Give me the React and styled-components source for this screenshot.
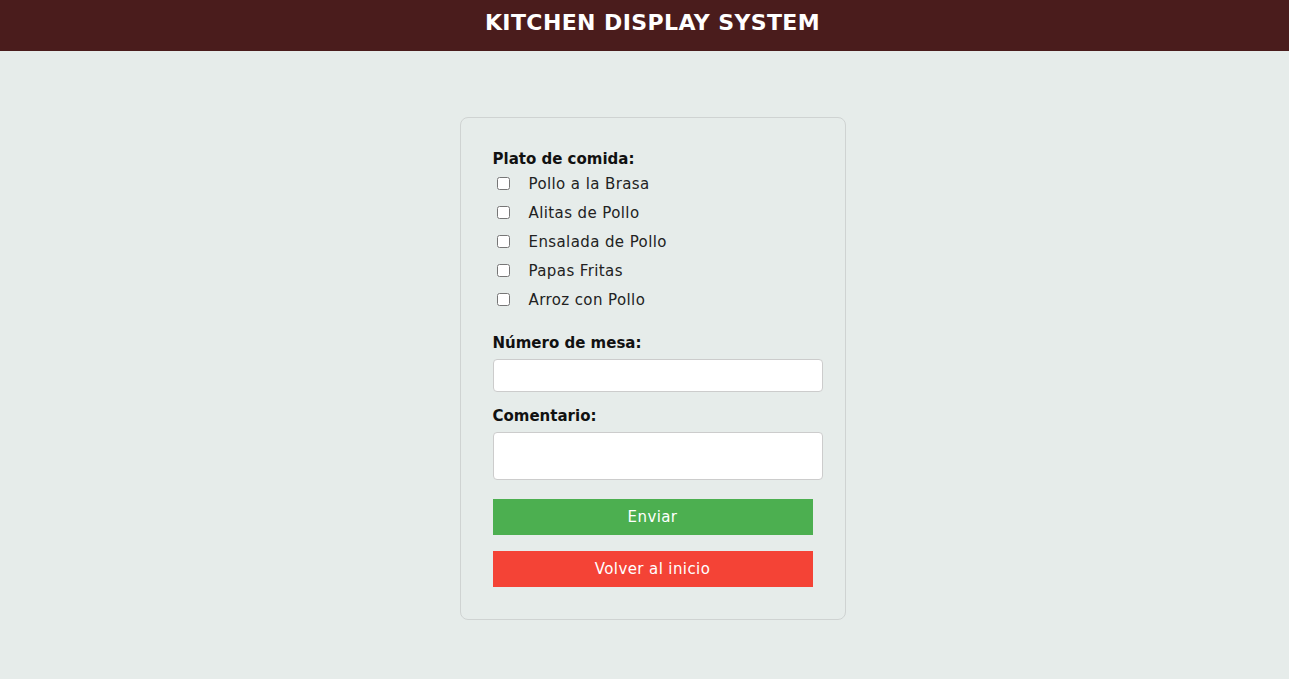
import React from "react"
import styled, { createGlobalStyle } from "styled-components"

const GlobalStyle = createGlobalStyle`
    body {
        margin: 0;
        background: #e6ecea;
        font-family: "DejaVu Sans", "Open Sans", sans-serif;
    }
`

const Header = styled.header`
    height: 51px;
    background: #4a1c1c;
    display: flex;
    align-items: center;
    justify-content: center;
    padding-left: 16px;
    padding-bottom: 6px;
    box-sizing: border-box;
`

const Title = styled.h1`
    margin: 0;
    color: #ffffff;
    font-size: 22px;
    font-weight: 700;
    letter-spacing: 0.4px;
`

const Main = styled.main`
    display: flex;
    justify-content: center;
    padding: 66px 0 0 16px;
`

const Card = styled.form`
    width: 320px;
    padding: 32px;
    border: 1px solid #cfd3d2;
    border-radius: 8px;
    display: flex;
    flex-direction: column;
`

const Label = styled.div`
    font-size: 15px;
    font-weight: 700;
    color: #111;
    line-height: 18px;
    margin-top: ${({ top }) => top || "0px"};
    margin-bottom: ${({ bottom }) => bottom || "7px"};
`

const Options = styled.div`
    display: flex;
    flex-direction: column;
`

const Option = styled.label`
    display: flex;
    align-items: center;
    height: 29px;
    font-size: 15px;
    letter-spacing: 0.4px;
    color: #222;
`

const Check = styled.input`
    width: 13px;
    height: 13px;
    margin: 0 19px 0 4px;
`

const Field = styled.input`
    width: 100%;
    height: 23px;
    padding: 4px;
    border: 1px solid #cccccc;
    border-radius: 4px;
    background: #fff;
    margin: 0;
    font: inherit;
`

const Area = styled.textarea`
    width: 100%;
    height: 38px;
    padding: 4px;
    border: 1px solid #cccccc;
    border-radius: 4px;
    background: #fff;
    margin: 0;
    resize: none;
    display: block;
    font: inherit;
`

const Button = styled.button`
    width: 320px;
    height: 36px;
    border: none;
    color: #fff;
    font-family: inherit;
    font-size: 15px;
    letter-spacing: 0.4px;
    background: ${({ color }) => color};
    margin-top: ${({ top }) => top};
    cursor: pointer;
`

const platos = [
    "Pollo a la Brasa",
    "Alitas de Pollo",
    "Ensalada de Pollo",
    "Papas Fritas",
    "Arroz con Pollo",
]

const App = () => {
    return (
        <>
            <GlobalStyle />
            <Header>
                <Title>KITCHEN DISPLAY SYSTEM</Title>
            </Header>
            <Main>
                <Card onSubmit={ e => e.preventDefault() }>
                    <Label bottom="1px">Plato de comida:</Label>
                    <Options>
                        {
                            platos.map(p => (
                                <Option key={ p }>
                                    <Check type="checkbox" />
                                    { p }
                                </Option>
                            ))
                        }
                    </Options>
                    <Label top="20px">Número de mesa:</Label>
                    <Field type="text" />
                    <Label top="15px">Comentario:</Label>
                    <Area />
                    <Button type="submit" color="#4caf50" top="19px">Enviar</Button>
                    <Button type="button" color="#f44336" top="16px">Volver al inicio</Button>
                </Card>
            </Main>
        </>
    )
}

export default App
